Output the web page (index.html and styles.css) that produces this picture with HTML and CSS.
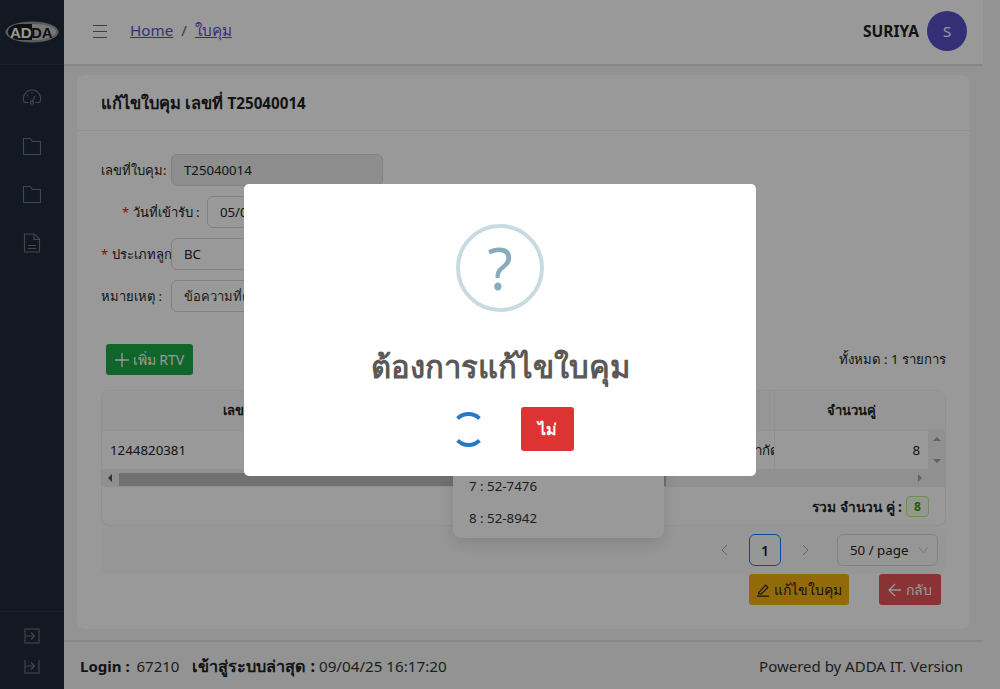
FILE: index.html
```html
<!DOCTYPE html>
<html lang="th">
<head>
  <meta charset="utf-8">
  <title>แก้ไขใบคุม</title>
  <link rel="stylesheet" href="styles.css">
</head>
<body>
  <div class="layout">
    <aside class="sidebar">
      <div class="logo">
        <svg width="54" height="22" viewBox="0 0 54 22">
          <ellipse cx="27" cy="11" rx="26.5" ry="10.5" fill="#9a9a9a"/>
          <ellipse cx="27" cy="11" rx="24" ry="8" fill="#c8c8c8"/>
          <path d="M27 3H14C7 4 3 7 3 11s4 7 11 8h13z" fill="#1c1c1c"/>
          <text x="5" y="16.500" class="logo-a">AD</text>
          <text x="26" y="16.500" class="logo-b">DA</text>
        </svg>
      </div>
      <nav class="side-nav">
        <svg class="side-icon" viewBox="0 0 20 20"><path d="M2.500 15.500h4M13.500 15.500h4M2.500 15.500a8.500 8.500 0 1 1 15 0M10 15l3-6"/><circle cx="10" cy="15.500" r="1.600"/><path d="M5 8l1 1M10 5v1.500"/></svg>
        <svg class="side-icon" viewBox="0 0 20 20"><path d="M1.500 2.500h7l2 3h8v13h-17z"/></svg>
        <svg class="side-icon" viewBox="0 0 20 20"><path d="M1.500 2.500h7l2 3h8v13h-17z"/></svg>
        <svg class="side-icon" viewBox="0 0 20 20"><path d="M2.500 1h10l5 5v13h-15zM12 1v5.500h5.500M6 12.500h8M6 15.500h8"/></svg>
      </nav>
      <div class="side-bottom">
        <svg class="side-icon small" viewBox="0 0 16 16"><path d="M1 1h14v14H1zM1 8h9M7 4.500L10.500 8 7 11.500"/></svg>
        <svg class="side-icon small" viewBox="0 0 16 16"><path d="M1 2v13h14V2M1 8h9M7 4.500L10.500 8 7 11.500"/></svg>
      </div>
    </aside>

    <div class="page">
      <header class="topbar">
        <div class="burger"><span></span><span></span><span></span></div>
        <div class="crumbs">
          <a href="#">Home</a><span class="sep">/</span><a href="#">ใบคุม</a>
        </div>
        <div class="user">
          <b>SURIYA</b>
          <span class="avatar">S</span>
        </div>
      </header>

      <main class="content">
        <section class="card">
          <div class="card-head"><span>แก้ไขใบคุม เลขที่ <span class="doc-no">T25040014</span></span></div>
          <div class="card-body">
            <div class="form">
              <div class="row">
                <label class="lbl">เลขที่ใบคุม:</label>
                <div class="input readonly">T25040014</div>
              </div>
              <div class="row">
                <label class="lbl lbl-wide"><i>*</i> วันที่เข้ารับ :</label>
                <div class="input short">05/04/2025</div>
              </div>
              <div class="row">
                <label class="lbl"><i>*</i> ประเภทลูก</label>
                <div class="input">BC</div>
              </div>
              <div class="row">
                <label class="lbl">หมายเหตุ :</label>
                <div class="input muted">ข้อความที่ต้องการ</div>
              </div>
            </div>

            <div class="tools">
              <button class="btn btn-add"><svg viewBox="0 0 14 14" width="14" height="14"><path d="M7 0v14M0 7h14"/></svg>เพิ่ม RTV</button>
              <span class="total">ทั้งหมด : 1 รายการ</span>
            </div>

            <div class="table-box">
              <div class="t-head">
                <div class="col-a">เลขที่ RTV</div>
                <div class="col-b">ชื่อลูกค้า</div>
                <div class="col-c">จำนวนคู่</div>
                <div class="col-s"></div>
              </div>
              <div class="t-row">
                <div class="col-a left">1244820381</div>
                <div class="col-b clip"><span>บริษัท เอดด้า ฟุตแวร์ จำกัด</span></div>
                <div class="col-c right">8</div>
                <div class="col-s vscroll"><em class="up"></em><em class="down"></em></div>
              </div>
              <div class="hscroll">
                <em class="arrow-l"></em>
                <div class="thumb"></div>
                <em class="arrow-r"></em>
              </div>
              <div class="t-sum">รวม จำนวน คู่ : <span class="tag">8</span></div>
            </div>

            <div class="pager">
              <svg class="chev" viewBox="0 0 10 12"><path d="M7 1L2 6l5 5"/></svg>
              <span class="page-no">1</span>
              <svg class="chev" viewBox="0 0 10 12"><path d="M3 1l5 5-5 5"/></svg>
              <div class="size">50 / page<svg viewBox="0 0 12 8"><path d="M1 1l5 6 5-6"/></svg></div>
            </div>

            <div class="actions">
              <button class="btn btn-edit"><svg viewBox="0 0 16 16" width="14" height="14"><path d="M3 11L11 2.500l2.500 2.500L6 12.500H3zM1 15h14"/></svg>แก้ไขใบคุม</button>
              <button class="btn btn-back"><svg viewBox="0 0 14 14" width="14" height="14"><path d="M13 7H1M7 1L1 7l6 6"/></svg>กลับ</button>
            </div>

            <ul class="dropdown">
              <li>7 : 52-7476</li>
              <li>8 : 52-8942</li>
            </ul>
          </div>
        </section>
      </main>

      <footer class="footer">
        <div class="foot-left"><b>Login :</b> <span class="id">67210</span> <b class="last">เข้าสู่ระบบล่าสุด :</b> <span class="date">09/04/25 16:17:20</span></div>
        <div>Powered by ADDA IT. Version</div>
      </footer>
    </div>
  </div>

  <div class="overlay">
    <div class="modal">
      <div class="q-icon">?</div>
      <h2>ต้องการแก้ไขใบคุม</h2>
      <div class="modal-actions">
        <span class="loader"></span>
        <button class="btn-no">ไม่</button>
      </div>
    </div>
  </div>
</body>
</html>
```

FILE: styles.css
```css
* { box-sizing: border-box; }

html, body {
  margin: 0;
  height: 689px;
  overflow: hidden;
}

body {
  font-family: "Noto Sans", "Open Sans", Tahoma, sans-serif;
  font-size: 14px;
  color: #222;
  background: #f5f5f5;
}

.layout {
  display: flex;
  height: 689px;
}

/* sidebar */
.sidebar {
  width: 64px;
  flex: none;
  display: flex;
  flex-direction: column;
  background: #212a39;
}

.logo {
  height: 65px;
  display: flex;
  align-items: center;
  justify-content: center;
  border-bottom: 1px solid #2f3744;
  padding-bottom: 1px;
}

.logo-a, .logo-b {
  font-family: "Liberation Sans", sans-serif;
  font-size: 15px;
  font-weight: bold;
}

.logo-a { fill: #fff; }
.logo-b { fill: #1c1c1c; }

.side-nav {
  flex: 1;
  display: flex;
  flex-direction: column;
  align-items: center;
  gap: 28.5px;
  padding-top: 22px;
}

.side-icon {
  width: 20px;
  height: 20px;
  fill: none;
  stroke: #70757d;
  stroke-width: 1.100;
}

.side-icon.small {
  width: 16px;
  height: 16px;
}

.side-bottom {
  height: 78px;
  border-top: 1px solid #2f3744;
  display: flex;
  flex-direction: column;
  align-items: center;
  gap: 14px;
  padding-top: 16px;
}

/* page */
.page {
  flex: 1;
  min-width: 0;
  display: flex;
  flex-direction: column;
  padding-right: 17px;
}

.topbar {
  height: 66px;
  flex: none;
  display: flex;
  align-items: center;
  padding: 0 16px 2px 29px;
  background: #fff;
  border-bottom: 2px solid #dde1e8;
}

.burger {
  width: 14px;
  display: flex;
  flex-direction: column;
  gap: 5px;
  margin-right: 23px;
}

.burger span {
  height: 1px;
  background: #666;
}

.crumbs {
  font-size: 15.200px;
  flex: 1;
}

.crumbs a { color: #5b51cc; }

.sep {
  margin: 0 8px;
  color: #666;
}

.user {
  display: flex;
  align-items: center;
  gap: 8px;
  font-size: 15.500px;
}

.user b { color: #222; }

.avatar {
  width: 40px;
  height: 40px;
  border-radius: 50%;
  background: #5850c8;
  color: #fff;
  font-size: 15px;
  display: flex;
  align-items: center;
  justify-content: center;
}

.content {
  flex: 1;
  min-height: 0;
  padding: 9px 13px 11px;
}

.card {
  height: 100%;
  background: #fff;
  border-radius: 8px;
  display: flex;
  flex-direction: column;
}

.card-head {
  height: 56px;
  flex: none;
  display: flex;
  align-items: center;
  padding-left: 24px;
  font-size: 16.400px;
  font-weight: bold;
  border-bottom: 1px solid #f0f0f0;
}

.doc-no { font-size: 15.200px; }

.card-body {
  position: relative;
  flex: 1;
  padding: 23px 24px 0;
}

.form {
  display: flex;
  flex-direction: column;
  gap: 10px;
}

.row {
  display: flex;
  align-items: center;
  height: 32px;
}

.lbl {
  width: 70px;
  flex: none;
  white-space: nowrap;
  font-size: 13px;
}

.lbl-wide {
  width: 106px;
  padding-left: 21px;
}

.lbl i {
  color: #e02020;
  font-style: normal;
}

.input {
  width: 212px;
  height: 32px;
  padding: 0 12px;
  display: flex;
  align-items: center;
  border: 1px solid #d9d9d9;
  border-radius: 6px;
  font-size: 13.200px;
  background: #fff;
}

.input.readonly { background: #ececec; }
.input.short { width: 176px; }
.input.muted { color: #333; font-size: 13px; }

.tools {
  display: flex;
  align-items: center;
  justify-content: space-between;
  margin-top: 32px;
  padding-left: 5px;
}

.total { font-size: 13.200px; }

.btn {
  display: inline-flex;
  align-items: center;
  justify-content: center;
  gap: 4px;
  border: 0;
  border-radius: 3px;
  height: 31px;
  padding: 0;
  font-family: inherit;
  font-size: 14px;
}

.btn svg {
  fill: none;
  stroke: currentColor;
  stroke-width: 1.300;
}

.btn-add {
  width: 87px;
  background: #1ba946;
  color: #fff;
}

.table-box {
  position: relative;
  margin-top: 15px;
  height: 136px;
  border: 1px solid #f0f0f0;
  border-radius: 8px;
  overflow: hidden;
}

.t-head, .t-row {
  display: flex;
  height: 40px;
  border-bottom: 1px solid #f0f0f0;
}

.t-head {
  background: #fafafa;
  font-weight: bold;
  font-size: 13px;
}

.t-row {
  height: 39px;
  font-size: 13.300px;
}

.t-head > div, .t-row > div {
  display: flex;
  align-items: center;
  justify-content: center;
}

.col-a { width: 300px; }
.col-b { width: 373px; border-right: 1px solid #f0f0f0; }
.col-c { width: 153px; }
.col-s { width: 17px; }

.t-row .left { justify-content: flex-start; padding-left: 8px; width: 350px; }
.t-row .right { justify-content: flex-end; padding-right: 8px; }
.t-row .clip { width: 323px; justify-content: flex-end; overflow: hidden; white-space: nowrap; }
.clip span { flex: none; margin-right: -5px; }

.vscroll {
  position: relative;
  background: #f1f1f1;
}

.up, .down {
  position: absolute;
  left: 5px;
  width: 0;
  height: 0;
  border-left: 4px solid transparent;
  border-right: 4px solid transparent;
}

.up { top: 6px; border-bottom: 4px solid #a3a3a3; }
.down { bottom: 6px; border-top: 4px solid #a3a3a3; }

.hscroll {
  position: relative;
  height: 17px;
  background: #f1f1f1;
}

.thumb {
  position: absolute;
  left: 17px;
  top: 3px;
  width: 547px;
  height: 13px;
  background: #bcbcbc;
}

.arrow-l, .arrow-r {
  position: absolute;
  top: 4px;
  width: 0;
  height: 0;
  border-top: 4px solid transparent;
  border-bottom: 4px solid transparent;
}

.arrow-l { left: 6px; border-right: 4px solid #505050; }
.arrow-r { left: 816px; border-left: 4px solid #a3a3a3; }

.t-sum {
  height: 39px;
  display: flex;
  align-items: center;
  justify-content: flex-end;
  gap: 4px;
  padding-right: 16px;
  font-weight: bold;
  font-size: 13.800px;
}

.tag {
  width: 23px;
  height: 21px;
  display: flex;
  align-items: center;
  justify-content: center;
  border: 1px solid #b7eb8f;
  border-radius: 4px;
  background: #f6ffed;
  color: #389e0d;
  font-size: 12px;
}

.pager {
  display: flex;
  align-items: center;
  justify-content: flex-end;
  height: 48px;
  padding: 8px 8px 8px 0;
  background: #fbfbfb;
  border-radius: 8px;
}

.chev {
  width: 10px;
  height: 12px;
  fill: none;
  stroke: #aaa;
  stroke-width: 1;
  margin: 0 19px;
}

.page-no {
  width: 32px;
  height: 32px;
  display: flex;
  align-items: center;
  justify-content: center;
  border: 1px solid #1677ff;
  border-radius: 6px;
  font-weight: 600;
  font-size: 14px;
}

.size {
  width: 101px;
  height: 32px;
  margin-left: 8px;
  padding: 0 8px 0 12px;
  display: flex;
  align-items: center;
  justify-content: space-between;
  border: 1px solid #d9d9d9;
  border-radius: 6px;
  font-size: 13.300px;
}

.size svg {
  width: 11px;
  height: 8px;
  fill: none;
  stroke: #bbb;
}

.actions {
  display: flex;
  justify-content: flex-end;
  gap: 30px;
  padding-right: 5px;
}

.btn-edit {
  width: 100px;
  background: #f5b111;
  color: #222;
}

.btn-back {
  width: 62px;
  background: #e45557;
  color: #fff;
}

.dropdown {
  position: absolute;
  left: 376px;
  top: 284px;
  width: 211px;
  height: 123px;
  margin: 0;
  padding: 4px 16px;
  list-style: none;
  display: flex;
  flex-direction: column;
  justify-content: flex-end;
  background: #fff;
  border-radius: 8px;
  box-shadow: 0 6px 16px rgba(0, 0, 0, .12);
  font-size: 13.300px;
  color: #333;
}

.dropdown li {
  height: 32px;
  display: flex;
  align-items: center;
}

.footer {
  height: 49px;
  flex: none;
  display: flex;
  align-items: center;
  justify-content: space-between;
  padding: 0 20px 0 16px;
  border-top: 2px solid #e4e4e4;
  font-size: 15px;
  color: #333;
}

.footer b { color: #222; }
.foot-left { white-space: nowrap; }
.id { margin-left: 3px; }
.last { margin-left: 9px; font-size: 16.200px; }
.date { font-size: 15.200px; }

/* dialog */
.overlay {
  position: fixed;
  inset: 0;
  display: flex;
  align-items: flex-start;
  justify-content: center;
  padding-top: 184px;
  background: rgba(0, 0, 0, .4);
}

.modal {
  width: 512px;
  height: 292px;
  background: #fff;
  border-radius: 5px;
  display: flex;
  flex-direction: column;
  align-items: center;
  padding-top: 40px;
}

.q-icon {
  width: 88px;
  height: 88px;
  border: 4px solid #c9dae1;
  border-radius: 50%;
  color: #87adbd;
  font-size: 58px;
  line-height: 80px;
  text-align: center;
}

.modal h2 {
  margin: 34px 0 0;
  font-size: 31px;
  line-height: 40px;
  color: #595959;
}

.modal-actions {
  display: flex;
  align-items: center;
  gap: 35px;
  margin-top: 21px;
  padding-left: 25px;
}

.loader {
  width: 35px;
  height: 35px;
  border: 4px solid #2778c4;
  border-color: #2778c4 transparent;
  border-radius: 50%;
}

.btn-no {
  width: 53px;
  height: 44px;
  border: 0;
  border-radius: 3px;
  background: #dd3333;
  color: #fff;
  font-family: inherit;
  font-size: 16px;
  font-weight: bold;
}
```
